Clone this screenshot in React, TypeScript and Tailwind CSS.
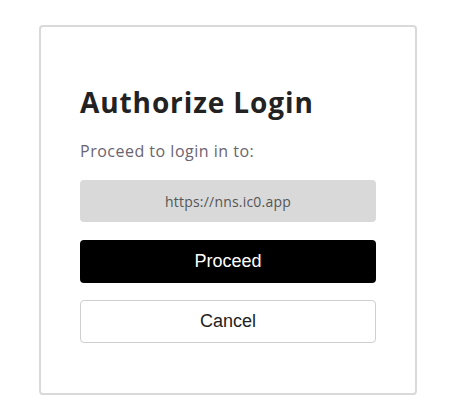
import React from 'react';

const App = () => {
  return (
    <div className="min-h-screen bg-white pt-[25px] pl-[39px]">
      <div className="w-[378px] h-[370px] border-2 border-[#d9d9d9] rounded-[4px] px-[39px] pt-[55px]">
        <h1 className="text-[28px] leading-[40px] font-bold text-[#222] font-['Open_Sans',sans-serif] tracking-[0.9px]">
          Authorize Login
        </h1>
        <p className="mt-[19px] text-[16px] leading-[20px] text-[#6b6470] font-['Open_Sans',sans-serif] tracking-[0.5px]">
          Proceed to login in to:
        </p>
        <div className="mt-[19px] h-[42px] rounded-[4px] bg-[#d9d9d9] flex items-center justify-center text-[14px] tracking-[0.2px] text-[#555] font-['Open_Sans',sans-serif]">
          https://nns.ic0.app
        </div>
        <button className="mt-[18px] w-full h-[43px] rounded-[4px] bg-black text-white text-[18px] font-['Liberation_Sans',sans-serif]">
          Proceed
        </button>
        <button className="mt-[17px] w-full h-[43px] rounded-[4px] bg-white border border-[#cfcfcf] text-[#222] text-[18px] font-['Liberation_Sans',sans-serif]">
          Cancel
        </button>
      </div>
    </div>
  );
};

export default App;
